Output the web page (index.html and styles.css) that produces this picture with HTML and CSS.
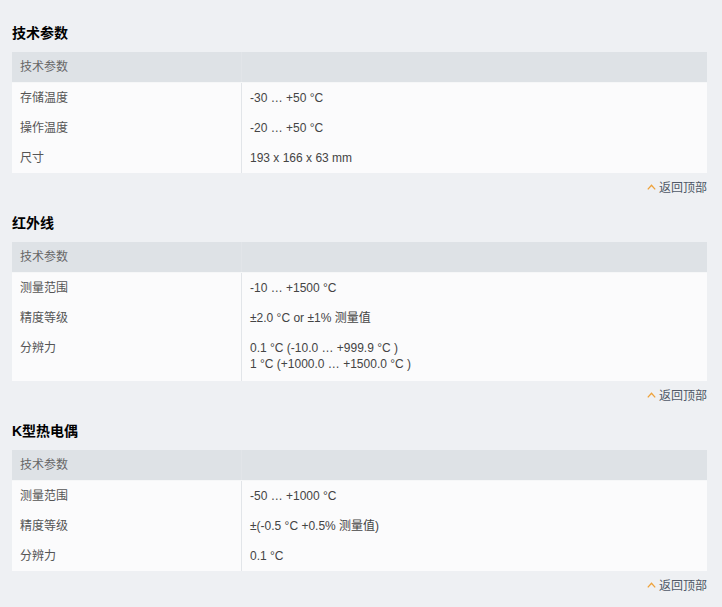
FILE: index.html
```html
<!DOCTYPE html>
<html lang="zh">
<head>
<meta charset="utf-8">
<title>技术参数</title>
<link rel="stylesheet" href="styles.css">
</head>
<body>
<div class="page">
  <section class="spec">
    <h3 class="spec-title">技术参数</h3>
    <table class="spec-table">
      <thead><tr><th>技术参数</th><th></th></tr></thead>
      <tbody>
        <tr><td>存储温度</td><td>-30 … +50 °C</td></tr>
        <tr><td>操作温度</td><td>-20 … +50 °C</td></tr>
        <tr><td>尺寸</td><td>193 x 166 x 63 mm</td></tr>
      </tbody>
    </table>
    <div class="back"><a class="back-link" href="#"><svg class="up" width="9" height="6" viewBox="0 0 9 6"><path d="M0.8 5.4 L4.5 1.2 L8.2 5.4" fill="none" stroke="#eea23a" stroke-width="1.3"/></svg>返回顶部</a></div>
  </section>
  <section class="spec">
    <h3 class="spec-title">红外线</h3>
    <table class="spec-table">
      <thead><tr><th>技术参数</th><th></th></tr></thead>
      <tbody>
        <tr><td>测量范围</td><td>-10 … +1500 °C</td></tr>
        <tr><td>精度等级</td><td>±2.0 °C or ±1% 测量值</td></tr>
        <tr class="tall"><td>分辨力</td><td>0.1 °C (-10.0 … +999.9 °C )<br>1 °C (+1000.0 … +1500.0 °C )</td></tr>
      </tbody>
    </table>
    <div class="back"><a class="back-link" href="#"><svg class="up" width="9" height="6" viewBox="0 0 9 6"><path d="M0.8 5.4 L4.5 1.2 L8.2 5.4" fill="none" stroke="#eea23a" stroke-width="1.3"/></svg>返回顶部</a></div>
  </section>
  <section class="spec">
    <h3 class="spec-title">K型热电偶</h3>
    <table class="spec-table">
      <thead><tr><th>技术参数</th><th></th></tr></thead>
      <tbody>
        <tr><td>测量范围</td><td>-50 … +1000 °C</td></tr>
        <tr><td>精度等级</td><td>±(-0.5 °C +0.5% 测量值)</td></tr>
        <tr><td>分辨力</td><td>0.1 °C</td></tr>
      </tbody>
    </table>
    <div class="back"><a class="back-link" href="#"><svg class="up" width="9" height="6" viewBox="0 0 9 6"><path d="M0.8 5.4 L4.5 1.2 L8.2 5.4" fill="none" stroke="#eea23a" stroke-width="1.3"/></svg>返回顶部</a></div>
  </section>
</div>
</body>
</html>
```
FILE: styles.css
```css
html, body {
  margin: 0;
  padding: 0;
  background: #eef0f3;
}
body {
  font-family: "Liberation Sans", "Noto Sans CJK SC", Arial, sans-serif;
  font-size: 12px;
  color: #444;
}
.page {
  padding: 23px 15px 0 12px;
}
.spec-title {
  margin: 0 0 9px 0;
  font-size: 14px;
  line-height: 20px;
  height: 20px;
  font-weight: bold;
  color: #000;
}
.spec + .spec .spec-title {
  margin-top: 17px;
}
.spec-table {
  width: 100%;
  border-collapse: collapse;
  table-layout: fixed;
}
.spec-table th:first-child,
.spec-table td:first-child {
  width: 213px;
  border-right: 1px solid #e2e5e9;
}
.spec-table th {
  background: #dee2e6;
  height: 30px;
  padding: 0 8px;
  text-align: left;
  font-weight: normal;
  color: #666;
  line-height: 16px;
  border-bottom: 1px solid #f6f7f8;
}
.spec-table td {
  background: #fbfbfc;
  height: 30px;
  padding: 0 8px;
  line-height: 16px;
  vertical-align: middle;
  color: #444;
}
.spec-table td:first-child {
  color: #555;
}
.spec-table tr.tall td {
  vertical-align: top;
  height: auto;
  padding-top: 7px;
  padding-bottom: 9px;
}
.back {
  margin-top: 7px;
  display: flex;
  justify-content: flex-end;
  height: 16px;
}
.back-link {
  color: #4f5866;
  text-decoration: none;
  display: flex;
  align-items: center;
  gap: 3px;
  line-height: 16px;
  height: 16px;
}
.up {
  display: block;
  margin-top: -2px;
}
```
